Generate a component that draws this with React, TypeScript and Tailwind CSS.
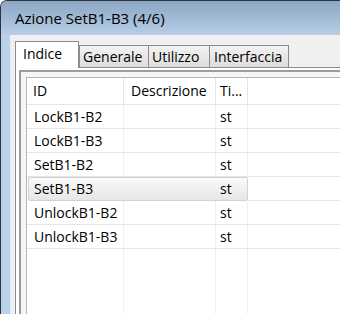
const rows = ["LockB1-B2", "LockB1-B3", "SetB1-B2", "SetB1-B3", "UnlockB1-B2", "UnlockB1-B3"];
const selected = "SetB1-B3";

export default function App() {
  return (
    <div
      className="w-[340px] h-[314px] overflow-hidden bg-white text-black"
      style={{ fontFamily: '"Open Sans", "Noto Sans", sans-serif' }}
    >
      <div className="h-full flex flex-col rounded-tl-[7px] border-l border-t border-[#2b3440] overflow-hidden bg-[#bad2ea]">
        {/* title bar */}
        <div className="h-[34px] shrink-0 flex items-center pl-[14px] bg-gradient-to-b from-[#8ca6c4] to-[#b7cee6]">
          <span className="text-[15px] leading-none">Azione SetB1-B3 (4/6)</span>
        </div>

        <div className="flex flex-1 min-h-0">
          {/* left frame */}
          <div className="w-[9px] shrink-0 bg-[#bad2ea]" />

          {/* client */}
          <div className="flex-1 min-w-0 flex flex-col border-l border-[#e4ecf5] bg-[#f0f0f0] pt-[6px] pl-[4px]">
            {/* tabs */}
            <div className="h-[26px] shrink-0 flex items-end text-[14px] leading-none">
              <div className="relative z-10 -mb-px h-[27px] w-[64px] border-l border-t border-r border-[#898c95] bg-white flex items-center pl-[7px] pb-[2px]">
                Indice
              </div>
              <div className="h-[22px] w-[70px] border border-b-0 border-[#898c95] bg-gradient-to-b from-[#f3f3f3] to-[#dddddd] flex items-center pl-[3px]">
                Generale
              </div>
              <div className="h-[22px] w-[61px] border-t border-r border-[#898c95] bg-gradient-to-b from-[#f3f3f3] to-[#dddddd] flex items-center pl-[3px]">
                Utilizzo
              </div>
              <div className="h-[22px] w-[79px] border-t border-r border-[#898c95] bg-gradient-to-b from-[#f3f3f3] to-[#dddddd] flex items-center pl-[4px]">
                Interfaccia
              </div>
            </div>

            {/* panel */}
            <div className="flex-1 min-h-0 flex flex-col border-t border-l border-[#898c95] bg-white pt-[2px] pl-[3px]">
              <div className="flex-1 min-h-0 flex flex-col border-t-2 border-l-2 border-[#9c9c9c] bg-[#f6f6f6] pt-[5px] pl-[5px]">
                <div className="flex-1 min-h-0 flex flex-col border-t border-l border-[#b4b4b4] bg-white text-[14px] leading-none">
                  {/* header */}
                  <div className="h-[27px] shrink-0 flex border-b border-[#e5e5e5]">
                    <div className="w-[97px] border-r border-[#e5e5e5] flex items-center pl-[6px]">ID</div>
                    <div className="w-[92px] border-r border-[#e5e5e5] flex items-center pl-[7px]">Descrizione</div>
                    <div className="w-[32px] border-r border-[#e5e5e5] flex items-center pl-[4px]">Ti...</div>
                    <div className="flex-1" />
                  </div>

                  {/* rows */}
                  {rows.map((r) =>
                    r === selected ? (
                      <div key={r} className="h-[24px] shrink-0 flex">
                        <div className="w-[220px] ml-px flex rounded-[2px] border border-[#d2d2d2] bg-gradient-to-b from-[#fafafa] to-[#e6e6e6]">
                          <div className="w-[95px] flex items-center pl-[5px]">{r}</div>
                          <div className="w-[92px]" />
                          <div className="flex-1 flex items-center pl-[4px]">st</div>
                        </div>
                        <div className="flex-1 border-b border-[#e5e5e5]" />
                      </div>
                    ) : (
                      <div key={r} className="h-[24px] shrink-0 flex border-b border-[#e5e5e5]">
                        <div className="w-[97px] border-r border-[#f0f0f0] flex items-center pl-[7px]">{r}</div>
                        <div className="w-[92px] border-r border-[#f0f0f0]" />
                        <div className="w-[32px] border-r border-[#f0f0f0] flex items-center pl-[4px]">st</div>
                        <div className="flex-1" />
                      </div>
                    )
                  )}

                  {/* empty area */}
                  <div className="flex-1 flex">
                    <div className="w-[97px] border-r border-[#f0f0f0]" />
                    <div className="w-[92px] border-r border-[#f0f0f0]" />
                    <div className="w-[32px] border-r border-[#f0f0f0]" />
                    <div className="flex-1" />
                  </div>
                </div>
              </div>
            </div>
          </div>
        </div>
      </div>
    </div>
  );
}
